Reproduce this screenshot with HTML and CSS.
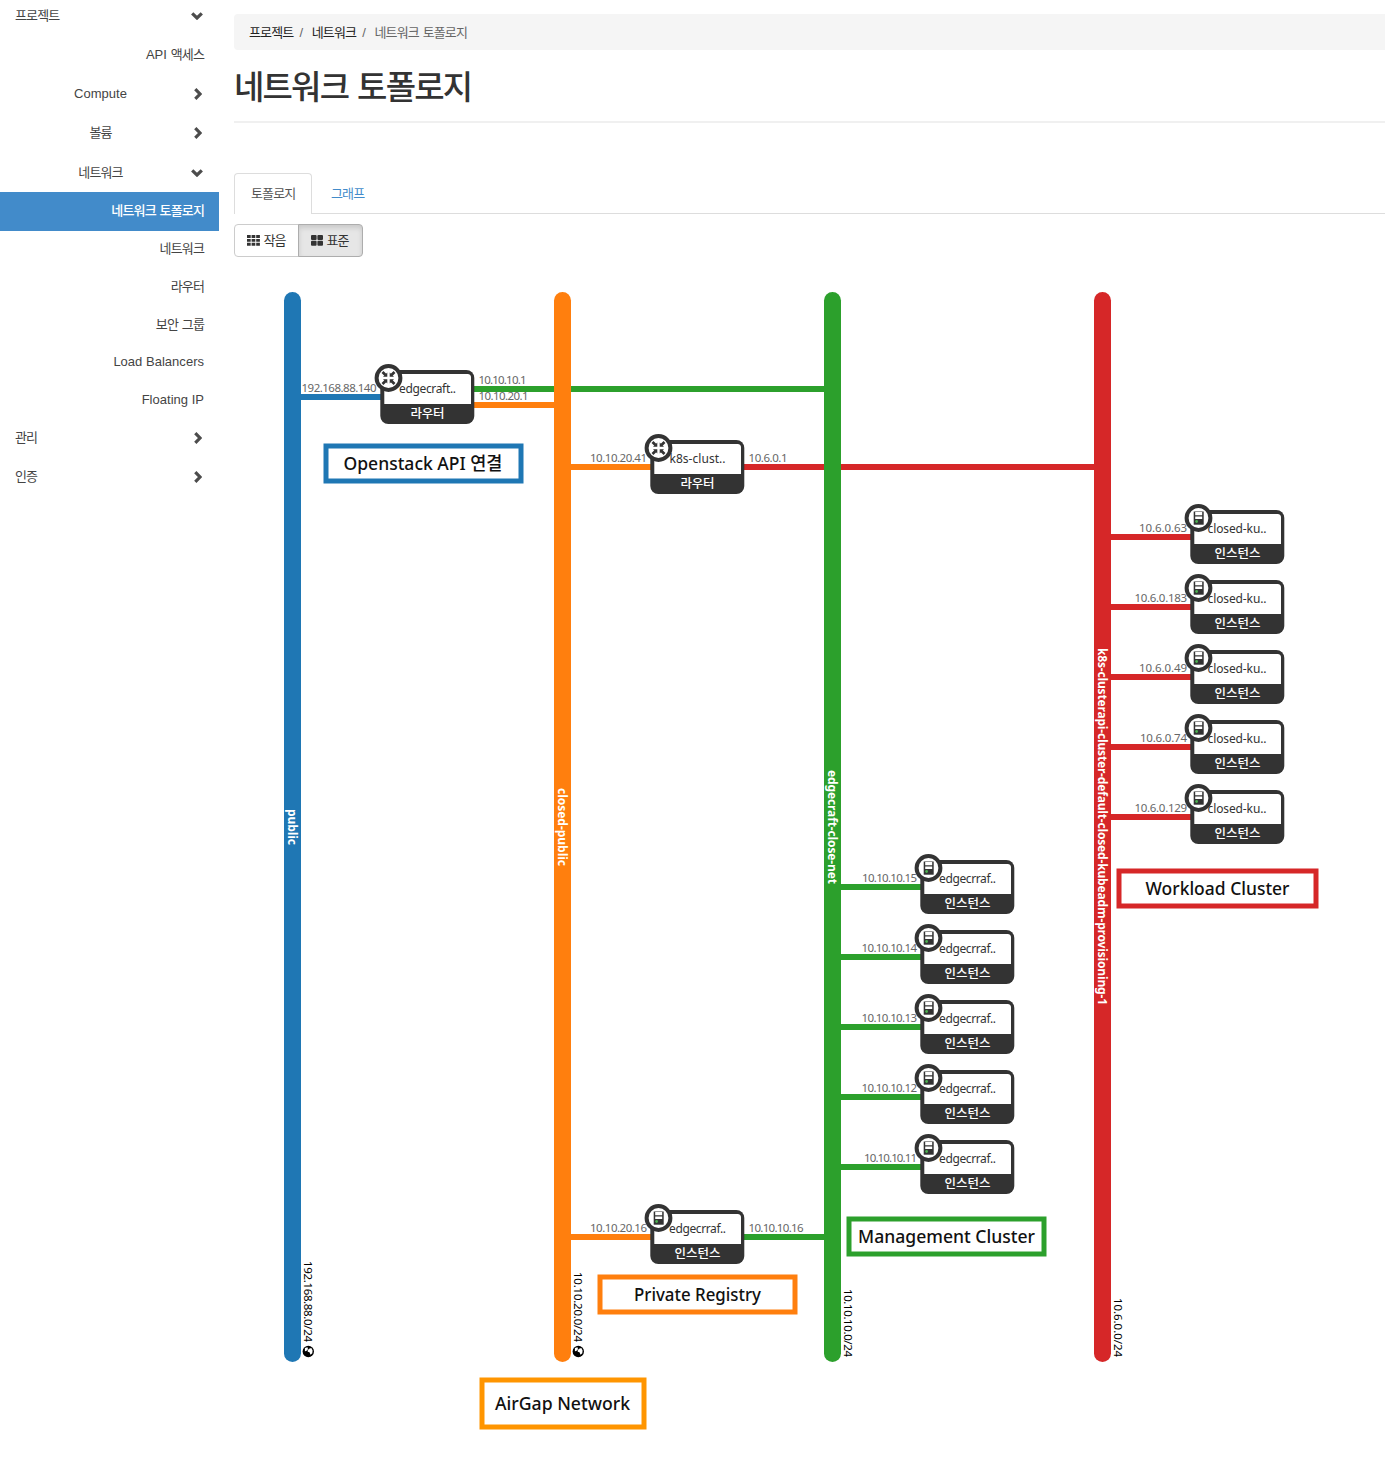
FILE: index.html
```html
<!DOCTYPE html>
<html lang="ko">
<head>
<meta charset="utf-8">
<title>네트워크 토폴로지</title>
<link rel="stylesheet" href="styles.css">
</head>
<body>
<svg class="sprite" width="0" height="0">
  <defs>
    <symbol id="down" viewBox="0 0 12 8"><path d="M1.2 1.3 6 6l4.8-4.7" class="chev"/></symbol>
    <symbol id="right" viewBox="0 0 8 12"><path d="M1.3 1.2 6 6l-4.7 4.8" class="chev"/></symbol>
    <g id="box">
      <rect x=".3" width="94" height="54" rx="8" fill="#333"/>
      <path d="M4.3 34V4H87.500Q91 4 91 7.500V34Z" fill="#fff"/>
    </g>
    <g id="server">
      <circle cx="8.500" cy="8" r="11.900" class="ring"/>
      <rect x="3.700" y="1.500" width="10" height="13.200" fill="#333"/>
      <path d="M5.200 2h7v3.300H5.200zM5.200 6.400h7v2.500H5.200z" fill="#fff"/>
      <circle cx="6.600" cy="11.500" r="1.400" fill="#4caf50"/>
    </g>
    <g id="router">
      <circle cx="8.500" cy="8" r="11.900" class="ring"/>
      <g id="arrows" transform="translate(8.500 8)">
        <path d="M6 -6 3 -3M-6 -6-3 -3M6 6 3 3M-6 6-3 3" stroke="#333" stroke-width="2.700"/>
        <path d="M1.200-1.200h4.300L1.200-5.500zM-1.200-1.200h-4.300L-1.200-5.500zM1.200 1.200h4.300L1.200 5.500zM-1.200 1.200h-4.300L-1.200 5.500z" fill="#333"/>
      </g>
    </g>
    <g id="globe">
      <circle r="5.700"/>
      <path d="M-3.400-3.400-.8-4.200-.3-2.300-2-.6-3.400-.2zM.8-2.800 3-3.400 4.300-1 4 1.700 2.200 3.200 1.200.8-.6.3-.6-1.300z" fill="#fff"/>
    </g>
  </defs>
</svg>
<div class="page">
  <nav class="sidebar">
    <a class="row first"><span>프로젝트</span><svg class="down"><use href="#down"/></svg></a>
    <a class="row leaf"><span><i>API</i> 액세스</span></a>
    <a class="row group"><span class="latin">Compute</span><svg class="right"><use href="#right"/></svg></a>
    <a class="row group"><span>볼륨</span><svg class="right"><use href="#right"/></svg></a>
    <a class="row group open"><span>네트워크</span><svg class="down"><use href="#down"/></svg></a>
    <a class="row sub active"><span>네트워크 토폴로지</span></a>
    <a class="row sub"><span>네트워크</span></a>
    <a class="row sub"><span>라우터</span></a>
    <a class="row sub"><span>보안 그룹</span></a>
    <a class="row sub"><span class="latin">Load Balancers</span></a>
    <a class="row sub"><span class="latin">Floating IP</span></a>
    <a class="row"><span>관리</span><svg class="right"><use href="#right"/></svg></a>
    <a class="row"><span>인증</span><svg class="right"><use href="#right"/></svg></a>
  </nav>
  <main class="main">
    <div class="breadcrumb"><a>프로젝트</a><b>/</b><a>네트워크</a><b>/</b><span>네트워크 토폴로지</span></div>
    <h1 class="title">네트워크 토폴로지</h1>
    <div class="tabs"><a class="tab current">토폴로지</a><a class="tab">그래프</a></div>
    <div class="toggle">
      <button class="btn"><svg width="13" height="11" viewBox="0 0 13 11"><path d="M0 0h3.700v2.900H0zM4.600 0h3.700v2.900H4.600zM9.200 0h3.700v2.900H9.200zM0 3.900h3.700v2.900H0zM4.600 3.900h3.700v2.900H4.600zM9.200 3.900h3.700v2.900H9.200zM0 7.800h3.700v2.900H0zM4.600 7.800h3.700v2.900H4.600zM9.200 7.800h3.700v2.900H9.200z"/></svg><span>작음</span></button>
      <button class="btn pressed"><svg width="12" height="11" viewBox="0 0 12 11"><rect width="5.600" height="5" rx="1"/><rect x="6.400" width="5.600" height="5" rx="1"/><rect y="5.800" width="5.600" height="5" rx="1"/><rect x="6.400" y="5.800" width="5.600" height="5" rx="1"/></svg><span>표준</span></button>
    </div>
    <svg class="topology" width="1151" height="1202" viewBox="234 257 1151 1202">
      <g class="links">
        <path class="blue" d="M300 397h82"/>
        <path class="green" d="M473 389h352"/>
        <path class="orange" d="M473 405h82M570 467h82M570 1237h82"/>
        <path class="red" d="M743 467h352M1110 537h82M1110 607h82M1110 677h82M1110 747h82M1110 817h82"/>
        <path class="green" d="M743 1237h82M840 887h82M840 957h82M840 1027h82M840 1097h82M840 1167h82"/>
      </g>
      <g>
        <rect x="284" y="292" width="17" height="1070" rx="8.500" fill="#1f77b4"/>
        <rect x="554" y="292" width="17" height="1070" rx="8.500" fill="#ff7f0e"/>
        <rect x="824" y="292" width="17" height="1070" rx="8.500" fill="#2ca02c"/>
        <rect x="1094" y="292" width="17" height="1070" rx="8.500" fill="#d62728"/>
      </g>
      <g class="netname">
        <text transform="translate(288 809) rotate(90)" textLength="36">public</text>
        <text transform="translate(558 788) rotate(90)" textLength="78">closed-public</text>
        <text transform="translate(828 770) rotate(90)" textLength="114">edgecraft-close-net</text>
        <text transform="translate(1098 648) rotate(90)" textLength="357">k8s-clusterapi-cluster-default-closed-kubeadm-provisioning-1</text>
      </g>
      <g class="cidr">
        <text transform="translate(304 1261) rotate(90)" textLength="81">192.168.88.0/24</text>
        <text transform="translate(574 1272) rotate(90)" textLength="70">10.10.20.0/24</text>
        <text transform="translate(844 1289) rotate(90)" textLength="68">10.10.10.0/24</text>
        <text transform="translate(1114 1298) rotate(90)" textLength="59">10.6.0.0/24</text>
        <use href="#globe" x="308.300" y="1351.500"/>
        <use href="#globe" x="578.300" y="1351.500"/>
      </g>

      <g transform="translate(380 370)">
        <use href="#box"/><text class="ip end" x="-3.500" y="22" textLength="75">192.168.88.140</text>
        <text class="ip" x="98.500" y="14" textLength="48">10.10.10.1</text><text class="ip" x="98.500" y="30" textLength="50">10.10.20.1</text>
        <text class="name" x="47.500" y="23" textLength="57">edgecraft..</text><text class="type" x="47.500" y="47.500" textLength="34">라우터</text><use href="#router"/>
      </g>
      <g transform="translate(650 440)">
        <use href="#box"/><text class="ip end" x="-3" y="22" textLength="57">10.10.20.41</text><text class="ip" x="98.500" y="22" textLength="39">10.6.0.1</text>
        <text class="name" x="47.500" y="23" textLength="56">k8s-clust..</text><text class="type" x="47.500" y="47.500" textLength="34">라우터</text><use href="#router"/>
      </g>
      <g transform="translate(1190 510)">
        <use href="#box"/><text class="ip end" x="-3" y="22" textLength="48">10.6.0.63</text>
        <text class="name" x="47" y="23" textLength="59">closed-ku..</text><text class="type" x="47.500" y="47.500" textLength="46">인스턴스</text><use href="#server"/>
      </g>
      <g transform="translate(1190 580)">
        <use href="#box"/><text class="ip end" x="-3" y="22" textLength="52.500">10.6.0.183</text>
        <text class="name" x="47" y="23" textLength="59">closed-ku..</text><text class="type" x="47.500" y="47.500" textLength="46">인스턴스</text><use href="#server"/>
      </g>
      <g transform="translate(1190 650)">
        <use href="#box"/><text class="ip end" x="-3" y="22" textLength="48">10.6.0.49</text>
        <text class="name" x="47" y="23" textLength="59">closed-ku..</text><text class="type" x="47.500" y="47.500" textLength="46">인스턴스</text><use href="#server"/>
      </g>
      <g transform="translate(1190 720)">
        <use href="#box"/><text class="ip end" x="-3" y="22" textLength="47">10.6.0.74</text>
        <text class="name" x="47" y="23" textLength="59">closed-ku..</text><text class="type" x="47.500" y="47.500" textLength="46">인스턴스</text><use href="#server"/>
      </g>
      <g transform="translate(1190 790)">
        <use href="#box"/><text class="ip end" x="-3" y="22" textLength="52.500">10.6.0.129</text>
        <text class="name" x="47" y="23" textLength="59">closed-ku..</text><text class="type" x="47.500" y="47.500" textLength="46">인스턴스</text><use href="#server"/>
      </g>
      <g transform="translate(920 860)">
        <use href="#box"/><text class="ip end" x="-3" y="22" textLength="55">10.10.10.15</text>
        <text class="name" x="47.500" y="23" textLength="57">edgecrraf..</text><text class="type" x="47.500" y="47.500" textLength="46">인스턴스</text><use href="#server"/>
      </g>
      <g transform="translate(920 930)">
        <use href="#box"/><text class="ip end" x="-3" y="22" textLength="55.500">10.10.10.14</text>
        <text class="name" x="47.500" y="23" textLength="57">edgecrraf..</text><text class="type" x="47.500" y="47.500" textLength="46">인스턴스</text><use href="#server"/>
      </g>
      <g transform="translate(920 1000)">
        <use href="#box"/><text class="ip end" x="-3" y="22" textLength="55.500">10.10.10.13</text>
        <text class="name" x="47.500" y="23" textLength="57">edgecrraf..</text><text class="type" x="47.500" y="47.500" textLength="46">인스턴스</text><use href="#server"/>
      </g>
      <g transform="translate(920 1070)">
        <use href="#box"/><text class="ip end" x="-3" y="22" textLength="55.500">10.10.10.12</text>
        <text class="name" x="47.500" y="23" textLength="57">edgecrraf..</text><text class="type" x="47.500" y="47.500" textLength="46">인스턴스</text><use href="#server"/>
      </g>
      <g transform="translate(920 1140)">
        <use href="#box"/><text class="ip end" x="-3" y="22" textLength="53">10.10.10.11</text>
        <text class="name" x="47.500" y="23" textLength="57">edgecrraf..</text><text class="type" x="47.500" y="47.500" textLength="46">인스턴스</text><use href="#server"/>
      </g>
      <g transform="translate(650 1210)">
        <use href="#box"/><text class="ip end" x="-3" y="22" textLength="57">10.10.20.16</text><text class="ip" x="98.500" y="22" textLength="55">10.10.10.16</text>
        <text class="name" x="47.500" y="23" textLength="57">edgecrraf..</text><text class="type" x="47.500" y="47.500" textLength="46">인스턴스</text><use href="#server"/>
      </g>

      <g class="note">
        <rect class="blue" x="326" y="446" width="195" height="35"/><text x="423" y="470" textLength="159" lengthAdjust="spacingAndGlyphs">Openstack API 연결</text>
        <rect class="red" x="1119" y="871" width="197" height="35"/><text x="1217.500" y="895" textLength="144" lengthAdjust="spacingAndGlyphs">Workload Cluster</text>
        <rect class="green" x="849" y="1219" width="195" height="35"/><text x="946.500" y="1243" textLength="177" lengthAdjust="spacingAndGlyphs">Management Cluster</text>
        <rect class="orange" x="600" y="1277" width="195" height="35"/><text x="697.500" y="1301" textLength="127" lengthAdjust="spacingAndGlyphs">Private Registry</text>
        <rect class="amber" x="482" y="1380" width="162" height="47"/><text x="562.500" y="1410" textLength="135" lengthAdjust="spacingAndGlyphs">AirGap Network</text>
      </g>
    </svg>
  </main>
</div>
</body>
</html>
```
FILE: styles.css
```css
* { box-sizing: border-box; }
body {
  margin: 0;
  background: #fff;
  color: #333;
  font: 13px/18px "Liberation Sans", "Noto Sans CJK KR", sans-serif;
  letter-spacing: -0.85px;
  word-spacing: 1px;
}
.sprite { position: absolute; }
.page { display: flex; width: 1385px; height: 1459px; overflow: hidden; }

.sidebar { width: 219px; flex: none; color: #444; }
.row { display: flex; align-items: center; justify-content: space-between; height: 39px; padding: 0 15px; }
.row.first { height: 35px; padding-bottom: 4px; }
.row.leaf, .row.sub { justify-content: flex-end; }
.row.sub { height: 37.7px; }
.row.open { height: 40px; padding-top: 2px; }
.row.group span { flex: 1; padding-right: 5px; text-align: center; }
.row.active { height: 38.5px; background: #428bca; color: #fff; font-weight: 500; }
.row i { font-style: normal; letter-spacing: 0; }
.row .latin { letter-spacing: 0.02px; word-spacing: 0; }
.row svg { flex: none; }
.down { width: 12px; height: 8px; margin-right: 1px; }
.right { width: 8px; height: 12px; margin: 0 2px 0 3px; }
.chev { fill: none; stroke: #4c4c4c; stroke-width: 3.2; }

.main { flex: none; width: 1166px; padding: 14px 0 0 15px; }
.breadcrumb { display: flex; height: 36px; align-items: center; padding: 2px 0 0 15px; background: #f5f5f5; border-radius: 4px 0 0 4px; color: #666; }
.breadcrumb a { color: #222; }
.breadcrumb b { font-weight: 400; padding: 0 9.5px 0 6px; }
.title { height: 73px; margin: 0 0 50px; padding-top: 14px; border-bottom: 2px solid #f0f0f0; font-size: 33px; line-height: 48px; font-weight: 500; letter-spacing: -1.8px; word-spacing: 1.5px; }
.tabs { display: flex; height: 41px; border-bottom: 1px solid #ddd; }
.tab { display: flex; align-items: center; height: 41px; padding: 0 19px; color: #428bca; white-space: nowrap; }
.tab.current { width: 78px; padding: 0 0 0 16px; color: #555; background: #fff; border: 1px solid #ddd; border-bottom: 0; border-radius: 4px 4px 0 0; }
.toggle { display: flex; height: 43px; padding-top: 10px; }
.btn { display: flex; align-items: center; gap: 3.5px; width: 65px; height: 33px; padding: 0 0 0 12px; border: 1px solid #ccc; border-radius: 4px 0 0 4px; background: #fff; color: #333; font: inherit; letter-spacing: inherit; }
.btn svg { fill: #333; flex: none; }
.btn.pressed { margin-left: -1px; border-color: #adadad; border-radius: 0 4px 4px 0; background: #e6e6e6; box-shadow: inset 0 3px 5px rgba(0, 0, 0, .125); }

.topology { display: block; letter-spacing: 0; word-spacing: 0; font-family: "Noto Sans", "Noto Sans CJK KR", sans-serif; }
.blue { stroke: #1f77b4; }
.orange { stroke: #ff7f0e; }
.green { stroke: #2ca02c; }
.red { stroke: #d62728; }
.amber { stroke: #ff9500; }
.links { stroke-width: 6; fill: none; }
.netname { fill: #fff; font-size: 12px; font-weight: 700; }
.cidr { fill: #000; font-size: 11.5px; }
.ring { fill: #fff; stroke: #333; stroke-width: 4; }
.ip { fill: #666; font-size: 11.5px; }
.ip.end { text-anchor: end; }
.name { fill: #333; font-size: 12px; text-anchor: middle; }
.type { fill: #fff; font-size: 12.5px; font-weight: 500; text-anchor: middle; }
.note { font-size: 18px; font-weight: 500; }
.note rect { fill: #fff; stroke-width: 5; }
.note text { fill: #111; text-anchor: middle; }
```
